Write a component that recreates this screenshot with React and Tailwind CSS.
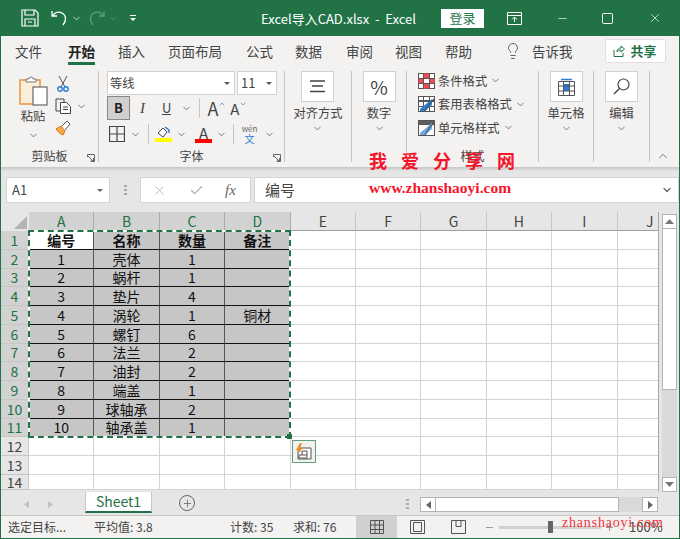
import React from 'react';
import { ChevronDown, ChevronUp, Lightbulb, Plus, Minus, X, Check } from 'lucide-react';

const font = 'font-["Noto_Sans_CJK_SC","Liberation_Sans",sans-serif]';

const columns = ['A', 'B', 'C', 'D', 'E', 'F', 'G', 'H', 'I', 'J'];

const rows = [
  ['编号', '名称', '数量', '备注'],
  ['1', '壳体', '1', ''],
  ['2', '蜗杆', '1', ''],
  ['3', '垫片', '4', ''],
  ['4', '涡轮', '1', '铜材'],
  ['5', '螺钉', '6', ''],
  ['6', '法兰', '2', ''],
  ['7', '油封', '2', ''],
  ['8', '端盖', '1', ''],
  ['9', '球轴承', '2', ''],
  ['10', '轴承盖', '1', ''],
];

function Caret({ className = '' }) {
  return <ChevronDown size={11} strokeWidth={1.5} className={`text-[#444] ${className}`} />;
}

function TitleBar() {
  return (
    <div className="flex h-9 shrink-0 items-center bg-[#217346] text-white">
      <svg width="18" height="18" viewBox="0 0 18 18" fill="none" stroke="#fff" strokeWidth="1.2" className="ml-[20px]">
        <path d="M1 1h13l3 3v13H1z" />
        <path d="M4 1v5h9V1M4 17v-7h10v7M7 13h4" />
      </svg>
      <svg width="17" height="18" viewBox="0 0 17 18" fill="none" stroke="#fff" strokeWidth="1.3" className="ml-[12px]">
        <path d="M1 2v5h5M1.500 7C4 3 8 2.500 11 4c4 2 5 7 1 12" />
      </svg>
      <Caret className="ml-[3px] text-white" />
      <svg width="17" height="18" viewBox="0 0 17 18" fill="none" stroke="#5f9d7c" strokeWidth="1.3" className="ml-[6px]">
        <path d="M16 2v5h-5M15.500 7C13 3 9 2.500 6 4c-4 2-5 7-1 12" />
      </svg>
      <ChevronDown size={11} strokeWidth={1.5} className="ml-[3px] text-[#5f9d7c]" />
      <svg width="8" height="8" viewBox="0 0 8 8" fill="#fff" className="ml-[10px]">
        <path d="M1 1h6v1H1zM1 4h6L4 7z" />
      </svg>
      <div className="ml-[124px] w-[156px] whitespace-nowrap text-[13px] leading-none">Excel导入CAD.xlsx&nbsp; -&nbsp; Excel</div>
      <div className="ml-[24px] flex h-[19px] w-[43px] items-center justify-center bg-white text-[13px] text-[#217346]">登录</div>
      <svg width="15" height="13" viewBox="0 0 15 13" fill="none" stroke="#fff" className="ml-[23px]">
        <path d="M.5.500h14v12H.5zM.5 3.500h14M7.500 10V5.500M5 7.500l2.500-2.500 2.500 2.500" />
      </svg>
      <Minus size={13} strokeWidth={1.2} className="ml-[34px]" />
      <svg width="11" height="11" viewBox="0 0 11 11" fill="none" stroke="#fff" className="ml-[33px]">
        <rect x=".5" y=".5" width="10" height="10" rx="1" />
      </svg>
      <X size={14} strokeWidth={1.2} className="ml-[35px]" />
    </div>
  );
}

function TabRow() {
  const tabs = [
    ['文件', 'ml-[14px]'],
    ['开始', 'ml-[26px]'],
    ['插入', 'ml-[23px]'],
    ['页面布局', 'ml-[23px]'],
    ['公式', 'ml-[24px]'],
    ['数据', 'ml-[22px]'],
    ['审阅', 'ml-[24px]'],
    ['视图', 'ml-[22px]'],
    ['帮助', 'ml-[23px]'],
  ];
  return (
    <div className="flex h-[30px] shrink-0 items-center bg-[#f3f2f1] text-[13.500px] text-[#444]">
      {tabs.map(([name, ml]) => (
        <div key={name} className={`relative flex h-full items-center ${ml} ${name === '开始' ? 'font-bold text-[#222]' : ''}`}>
          {name}
          {name === '开始' && <div className="absolute bottom-px left-0 h-[3px] w-full bg-[#217346]" />}
        </div>
      ))}
      <Lightbulb size={18} strokeWidth={1.2} className="ml-[32px] text-[#555]" />
      <div className="ml-[10px] text-[13.500px]">告诉我</div>
      <div className="ml-[32px] flex h-[24px] w-[61px] items-center justify-center gap-[5px] rounded-[2px] border border-[#e1dfdd] bg-white text-[13px] font-bold text-[#217346]">
        <svg width="12" height="12" viewBox="0 0 12 12" fill="none" stroke="#217346">
          <path d="M1 5v6.500h9V8M4 7c0-3 2-4 4-4V1l3.500 3L8 7V5C6 5 5 6 4 7z" />
        </svg>
        共享
      </div>
    </div>
  );
}

function GroupLauncher() {
  return (
    <svg width="8" height="8" viewBox="0 0 8 8" fill="none" stroke="#666">
      <path d="M.5 3V.5H7.500V7.500H4M1 2l5 5M3.500 7H6.500V4" />
    </svg>
  );
}

function Group({ width, label, launcher, children }) {
  return (
    <div className={`relative flex h-full shrink-0 flex-col border-r border-[#c8c6c4] ${width}`}>
      <div className="min-h-0 flex-1">{children}</div>
      <div className="h-[16px] text-center text-[12px] leading-[20px] text-[#444]">{label}</div>
      {launcher && (
        <div className="absolute right-[3px] bottom-0">
          <GroupLauncher />
        </div>
      )}
    </div>
  );
}

function BigDrop({ label, icon }) {
  return (
    <div className="flex flex-col items-center">
      <div className="flex h-[31px] w-[33px] items-center justify-center border border-[#d2d0ce] bg-white">{icon}</div>
      <div className="mt-[2px] text-[12.300px] leading-[18px] whitespace-nowrap text-[#444]">{label}</div>
      <Caret className="mt-[1px]" />
    </div>
  );
}

function StyleRow({ icon, label }) {
  return (
    <div className="flex h-[23.500px] items-center gap-[3px] text-[12.300px] text-[#444]">
      {icon}
      <span>{label}</span>
      <Caret />
    </div>
  );
}

function TableStyleIcon({ light }) {
  return (
    <svg width="17" height="16" viewBox="0 0 17 16" fill="none">
      <rect x=".5" y=".5" width="16" height="15" fill="#fff" stroke="#555" />
      <path d="M.5 .5h16v4H.5z" fill={light ? '#5f5f5f' : '#fff'} stroke="#555" />
      {!light && <path d="M.5 5.500h16M.5 10.500h16M5.500 .5v15M11.500 .5v15" stroke="#555" />}
      <path d="M2 13L14 3v6L7 15H2z" fill={light ? '#6aa9e4' : '#2b7cd3'} />
      <path d="M16 3l-5 5-4 7" stroke="#555" strokeWidth="1.200" />
    </svg>
  );
}

function Ribbon() {
  return (
    <div className="flex h-[101px] shrink-0 bg-[#f3f2f1] pt-[5px] pb-[5px]">
      <Group width="w-[98px]" label="剪贴板" launcher>
        <div className="flex">
          <div className="ml-[17px] flex w-[30px] flex-col items-center pt-[4px]">
            <svg width="29" height="31" viewBox="0 0 29 31" fill="none">
              <path d="M1 5h20v24H1z" fill="#fbeedb" stroke="#e8963c" strokeWidth="1.500" />
              <path d="M7 7V4h3a2 2 0 0 1 4 0h3v3z" fill="#fff" stroke="#777" />
              <rect x="14" y="12" width="14" height="18" fill="#fff" stroke="#666" strokeWidth="1.200" />
            </svg>
            <div className="mt-[3px] text-[12.300px] leading-[14px] text-[#444]">粘贴</div>
            <Caret className="mt-[7px]" />
          </div>
          <div className="ml-[7px] flex flex-col gap-[6px] pt-[4px]">
            <svg width="12" height="17" viewBox="0 0 12 17" fill="none" className="ml-[2px]" stroke="#555">
              <path d="M2 1l6 11M10 1L4 12" />
              <circle cx="3" cy="14" r="2.200" stroke="#2b7cd3" strokeWidth="1.400" />
              <circle cx="9" cy="14" r="2.200" stroke="#2b7cd3" strokeWidth="1.400" />
            </svg>
            <div className="flex items-center gap-[4px]">
              <svg width="17" height="16" viewBox="0 0 17 16" fill="none" stroke="#444">
                <path d="M1 1h8v3M1 1v12h4" />
                <path d="M5.500 4.500h6l4 4v7h-10z" fill="#fff" />
                <path d="M8 9h5M8 11.500h5" />
              </svg>
              <Caret />
            </div>
            <svg width="16" height="16" viewBox="0 0 16 16" fill="none">
              <path d="M1 9l5-3 4 5-2 4C5 14 3 12 1 9z" fill="#f3a847" stroke="#d9782a" />
              <path d="M7 6l5-5 3 3-5 6" fill="#fff" stroke="#555" />
            </svg>
          </div>
        </div>
      </Group>
      <Group width="w-[186px]" label="字体" launcher>
        <div className="ml-[8px] flex flex-col">
          <div className="flex gap-[2px]">
            <div className="flex h-[24px] w-[128px] items-center border border-[#d2d0ce] bg-white pr-[4px] pl-[2px] text-[12.300px] text-[#444]">
              <span className="flex-1">等线</span>
              <svg width="6" height="3" viewBox="0 0 6 3" fill="#555"><path d="M0 0h6L3 3z" /></svg>
            </div>
            <div className="flex h-[24px] w-[40px] items-center border border-[#d2d0ce] bg-white pr-[4px] pl-[3px] text-[13px] text-[#444]">
              <span className="flex-1">11</span>
              <svg width="6" height="3" viewBox="0 0 6 3" fill="#555"><path d="M0 0h6L3 3z" /></svg>
            </div>
          </div>
          <div className="mt-px flex h-[24px] items-center text-[#444]">
            <div className="flex h-[24px] w-[23px] items-center justify-center border border-[#8a8886] bg-[#d2d0ce] text-[13px] font-bold text-[#222]">B</div>
            <span className="ml-[10px] font-['Liberation_Serif',serif] text-[15px] italic">I</span>
            <span className="ml-[17px] border-b border-[#444] text-[13px] leading-[13px]">U</span>
            <Caret className="ml-[10px]" />
            <div className="ml-[7px] h-[20px] w-px bg-[#c8c6c4]" />
            <span className="ml-[7px] text-[18px] leading-none">A</span>
            <ChevronUp size={8} strokeWidth={2} className="mb-[9px] text-[#2b7cd3]" />
            <span className="ml-[4px] text-[15px] leading-none">A</span>
            <ChevronDown size={8} strokeWidth={2} className="mb-[9px] text-[#2b7cd3]" />
          </div>
          <div className="mt-[3px] flex h-[22px] items-center">
            <svg width="16" height="16" viewBox="0 0 16 16" fill="none" stroke="#444" className="ml-[2px]">
              <path d="M.5 .5h15v15H.5zM8 .5v15M.5 8h15" strokeWidth="1.200" />
            </svg>
            <Caret className="ml-[5px]" />
            <div className="ml-[7px] h-[20px] w-px bg-[#c8c6c4]" />
            <div className="ml-[6px] flex w-[17px] flex-col items-center">
              <svg width="14" height="12" viewBox="0 0 14 12" fill="none">
                <path d="M1 7l5-5 4 4-4 5z" fill="#fff" stroke="#444" />
                <path d="M8 1l4 3v3" stroke="#2b7cd3" strokeWidth="1.500" />
              </svg>
              <div className="h-[4px] w-[17px] bg-[#ffff00]" />
            </div>
            <Caret className="ml-[4px]" />
            <div className="ml-[8px] flex w-[17px] flex-col items-center">
              <span className="text-[15px] leading-[13px] text-[#444]">A</span>
              <div className="h-[4px] w-[17px] bg-[#ff0000]" />
            </div>
            <Caret className="ml-[4px]" />
            <div className="ml-[6px] h-[20px] w-px bg-[#c8c6c4]" />
            <div className="ml-[7px] flex w-[17px] flex-col items-center text-center">
              <span className="text-[8px] leading-[9px] text-[#666]">wén</span>
              <span className="text-[10px] leading-[11px] text-[#2b7cd3]">文</span>
            </div>
            <Caret className="ml-[6px]" />
          </div>
        </div>
      </Group>
      <Group width="w-[67px]" label="">
        <div className="flex justify-center">
          <BigDrop
            label="对齐方式"
            icon={
              <svg width="15" height="13" viewBox="0 0 15 13" stroke="#444" strokeWidth="1.300">
                <path d="M0 1h15M2 6h11M0 11.500h15" />
              </svg>
            }
          />
        </div>
      </Group>
      <Group width="w-[55px]" label="">
        <div className="flex justify-center">
          <BigDrop label="数字" icon={<span className="text-[19px] leading-none text-[#444]">%</span>} />
        </div>
      </Group>
      <Group width="w-[132px]" label="样式">
        <div className="-mt-[2px] ml-[11px] flex flex-col">
          <StyleRow
            label="条件格式"
            icon={
              <svg width="17" height="16" viewBox="0 0 17 16" fill="none">
                <rect x=".5" y=".5" width="16" height="15" fill="#fff" stroke="#555" />
                <path d="M5.500 .5h6v5h-6zM.5 5.500h5v5h-5zM11.500 5.500h5v5h-5zM5.500 10.500h6v5h-6z" fill="#ef4d55" />
                <path d="M.5 5.500h16M.5 10.500h16M5.500 .5v15M11.500 .5v15" stroke="#555" />
              </svg>
            }
          />
          <StyleRow label="套用表格格式" icon={<TableStyleIcon />} />
          <StyleRow label="单元格样式" icon={<TableStyleIcon light />} />
        </div>
      </Group>
      <Group width="w-[55px]" label="">
        <div className="flex justify-center">
          <BigDrop
            label="单元格"
            icon={
              <svg width="17" height="18" viewBox="0 0 17 18" fill="none">
                <path d="M.5 3.500h16v14H.5z" stroke="#555" fill="#fff" />
                <path d="M5 6h7v7H5z" fill="#2b7cd3" />
                <path d="M.5 8h16M.5 13h16M5.500 3.500v14M11.500 3.500v14" stroke="#555" />
                <path d="M3 1.500h11" stroke="#2b7cd3" strokeWidth="1.500" />
              </svg>
            }
          />
        </div>
      </Group>
      <Group width="w-[56px]" label="">
        <div className="flex justify-center">
          <BigDrop
            label="编辑"
            icon={
              <svg width="17" height="17" viewBox="0 0 17 17" fill="none" stroke="#444" strokeWidth="1.200">
                <circle cx="10.500" cy="6.500" r="5.500" />
                <path d="M6.500 10.500L1 16" strokeWidth="1.500" />
              </svg>
            }
          />
        </div>
      </Group>
      <div className="relative flex-1">
        <ChevronUp size={14} strokeWidth={1.200} className="absolute right-[9px] -bottom-[1px] text-[#444]" />
      </div>
    </div>
  );
}

function FormulaBar() {
  return (
    <div className="flex h-[45px] shrink-0 items-start bg-[#e6e6e6] pt-[10px] shadow-[inset_0_4px_3px_-2px_#c4c4c4]">
      <div className="ml-[5px] flex h-[26px] w-[104px] items-center border border-[#d4d4d4] bg-white pr-[6px] pl-[5px] text-[13px] text-[#444]">
        <span className="flex-1">A1</span>
        <svg width="6" height="3" viewBox="0 0 6 3" fill="#666"><path d="M0 0h6L3 3z" /></svg>
      </div>
      <div className="ml-[12px] flex h-[26px] w-[6px] flex-col items-center justify-center gap-[2px]">
        <div className="h-[2px] w-[3px] bg-[#aaa]" />
        <div className="h-[2px] w-[3px] bg-[#aaa]" />
        <div className="h-[2px] w-[3px] bg-[#aaa]" />
      </div>
      <div className="ml-[12px] flex h-[26px] w-[111px] items-center border border-[#d4d4d4] bg-white pl-[11px] text-[#b0b0b0]">
        <X size={15} strokeWidth={1.300} />
        <Check size={15} strokeWidth={2} className="ml-[22px]" />
        <span className="ml-[21px] font-['Liberation_Serif',serif] text-[15px] text-[#666] italic">fx</span>
      </div>
      <div className="ml-[3px] flex h-[26px] flex-1 items-center border border-[#d4d4d4] bg-white pr-[5px] pl-[10px] text-[15px] text-[#444]">
        <span className="flex-1">编号</span>
        <ChevronDown size={12} strokeWidth={2.500} className="text-[#666]" />
      </div>
    </div>
  );
}

function Sheet() {
  return (
    <div className="flex h-[280px] shrink-0 overflow-hidden bg-[#e6e6e6]">
      <div className="relative h-[280px] w-[658px] shrink-0 overflow-hidden border-r border-[#a8a8a8]">
        <div className="grid grid-cols-[28px_repeat(10,65.4px)] grid-rows-[19px_repeat(13,18.75px)_auto]">
          <div className="relative bg-[#e6e6e6]">
            <svg width="13" height="13" viewBox="0 0 13 13" className="absolute right-[2px] bottom-[2px]">
              <path d="M13 0v13H0z" fill="#b4b4b4" />
            </svg>
          </div>
          {columns.map((c, i) => (
            <div
              key={c}
              className={`flex items-center justify-center border-r border-b text-[14px] leading-none ${
                i < 4 ? 'border-r-[#ababab] border-b-[#217346] bg-[#d2d2d2] text-[#217346]' : 'border-r-[#c6c6c6] border-b-[#9f9f9f] bg-[#e6e6e6] text-[#444]'
              }`}
            >
              {c}
            </div>
          ))}
          {Array.from({ length: 14 }, (_, r) => (
            <React.Fragment key={r}>
              <div
                className={`flex items-center justify-center border-r border-b border-[#c6c6c6] text-[14px] leading-none ${
                  r < 11 ? 'border-r-[#217346] bg-[#d2d2d2] text-[#217346]' : 'bg-[#e6e6e6] text-[#444]'
                }`}
              >
                {r + 1}
              </div>
              {columns.map((c, i) => {
                const selected = r < 11 && i < 4;
                const text = selected ? rows[r][i] : '';
                return (
                  <div
                    key={c}
                    className={`flex items-center justify-center overflow-hidden border-r border-b text-[14px] leading-none whitespace-nowrap text-[#111] ${
                      selected ? 'border-r-[#555] border-b-[#111] bg-[#c6c6c6]' : 'border-[#d4d4d4] bg-white'
                    } ${r === 0 && i === 0 ? 'bg-white' : ''} ${r === 0 ? 'font-bold' : ''}`}
                  >
                    {text}
                  </div>
                );
              })}
            </React.Fragment>
          ))}
        </div>
        {/* copy marquee around A1:D11 */}
        <div className="absolute top-[18px] left-[27px] h-[208px] w-[263px] border-2 border-white">
          <div className="absolute -inset-[2px] border-2 border-dashed border-[#217346]" />
          <div className="absolute -right-[3px] -bottom-[3px] h-[5px] w-[5px] bg-[#217346]" />
        </div>
        {/* paste options button */}
        <div className="absolute top-[228px] left-[291px] flex h-[23px] w-[24px] items-center justify-center border border-[#5f9d7c] bg-[#f3f2f1]">
          <svg width="18" height="17" viewBox="0 0 18 17" fill="none">
            <path d="M3 5h13v11H3z" fill="#fff" stroke="#555" />
            <path d="M4 12h8v3H4zM7 12V8h5v4" stroke="#555" />
            <path d="M5 0L1 7h3L3 11l5-6H5l2-5z" fill="#ef8a2c" />
          </svg>
        </div>
      </div>
      <div className="ml-[3px] flex h-[280px] w-[15px] shrink-0 flex-col pt-[2px]">
        <div className="flex h-[15px] items-center justify-center border border-[#b4b4b4] bg-white">
          <svg width="9" height="5" viewBox="0 0 9 5" fill="#777"><path d="M4.500 0L9 5H0z" /></svg>
        </div>
        <div className="h-[161px] border-x border-b border-[#b4b4b4] bg-white" />
        <div className="flex-1 bg-[#d9d9d9]" />
        <div className="flex h-[15px] items-center justify-center border border-[#b4b4b4] bg-white">
          <svg width="9" height="5" viewBox="0 0 9 5" fill="#777"><path d="M4.500 5L9 0H0z" /></svg>
        </div>
      </div>
    </div>
  );
}

function TabBar() {
  return (
    <div className="flex h-[24px] shrink-0 items-start border-b border-[#c6c6c6] bg-[#e6e6e6]">
      <svg width="5" height="7" viewBox="0 0 5 7" fill="#c0c0c0" className="mt-[9px] ml-[23px]"><path d="M5 0v7L0 3.500z" /></svg>
      <svg width="5" height="7" viewBox="0 0 5 7" fill="#c0c0c0" className="mt-[9px] ml-[19px]"><path d="M0 0v7l5-3.500z" /></svg>
      <div className="ml-[32px] flex h-[21px] w-[67px] items-center justify-center border-x border-b-2 border-x-[#c6c6c6] border-b-[#217346] bg-white text-[14px] text-[#217346]">
        Sheet1
      </div>
      <div className="mt-[3px] ml-[27px] flex h-[16px] w-[16px] items-center justify-center rounded-full border border-[#666]">
        <Plus size={11} strokeWidth={1.500} className="text-[#555]" />
      </div>
      <div className="mt-[7px] ml-[211px] flex h-[10px] w-[3px] flex-col justify-between">
        <div className="h-[2px] bg-[#aaa]" />
        <div className="h-[2px] bg-[#aaa]" />
        <div className="h-[2px] bg-[#aaa]" />
      </div>
      <div className="mt-[5px] ml-[11px] flex h-[15px] w-[238px]">
        <div className="flex w-[16px] items-center justify-center border border-[#b4b4b4] bg-white">
          <svg width="5" height="8" viewBox="0 0 5 8" fill="#666"><path d="M5 0v8L0 4z" /></svg>
        </div>
        <div className="w-[183px] border-y border-r border-[#b4b4b4] bg-white" />
        <div className="flex-1 bg-[#d9d9d9]" />
        <div className="flex w-[16px] items-center justify-center border border-[#b4b4b4] bg-white">
          <svg width="5" height="8" viewBox="0 0 5 8" fill="#666"><path d="M0 0v8l5-4z" /></svg>
        </div>
      </div>
    </div>
  );
}

function StatusBar() {
  return (
    <div className="flex h-[22px] shrink-0 items-center bg-[#f3f2f1] text-[12px] text-[#444]">
      <span className="ml-[7px] w-[86px]">选定目标...</span>
      <span className="w-[136px]">平均值: 3.8</span>
      <span className="w-[63px]">计数: 35</span>
      <span className="w-[63px]">求和: 76</span>
      <div className="flex h-full w-[41px] items-center justify-center bg-[#d2d0ce]">
        <svg width="14" height="14" viewBox="0 0 14 14" fill="none" stroke="#555">
          <path d="M.5 .5h13v13H.5zM.5 5h13M.5 9.500h13M5 .5v13M9.500 .5v13" />
        </svg>
      </div>
      <svg width="15" height="14" viewBox="0 0 15 14" fill="none" stroke="#555" className="ml-[13px]">
        <path d="M.5 .5h14v13H.5zM3.500 2.500h8v9h-8z" />
      </svg>
      <svg width="15" height="14" viewBox="0 0 15 14" fill="none" stroke="#555" className="ml-[26px]">
        <path d="M.5 .5v13h14V.5zM5 .5v6h5V.5" />
      </svg>
      <Minus size={11} strokeWidth={1.200} className="ml-[18px] text-[#555]" />
      <div className="relative ml-[4px] h-[3px] w-[102px] bg-[#d2d0ce]">
        <div className="absolute -top-[5px] left-[49px] h-[12px] w-[5px] bg-[#666]" />
      </div>
      <Plus size={11} strokeWidth={1.200} className="ml-[3px] text-[#555]" />
      <span className="ml-[14px] text-[13px]">100%</span>
    </div>
  );
}

export default function App() {
  return (
    <div className={`relative flex h-[539px] w-[680px] flex-col overflow-hidden border-x border-b border-[#217346] ${font}`}>
      <TitleBar />
      <TabRow />
      <Ribbon />
      <FormulaBar />
      <Sheet />
      <TabBar />
      <StatusBar />
      {/* site watermark */}
      <div className="absolute top-[150px] left-[368px] flex w-[146px] justify-between font-['Liberation_Serif','Noto_Sans_CJK_SC',serif] text-[18px] leading-[24px] font-bold text-[#f5152b]">
        <span>我</span><span>爱</span><span>分</span><span>享</span><span>网</span>
      </div>
      <div className="absolute top-[179px] left-[368px] font-['Liberation_Serif',serif] text-[15.500px] leading-[18px] font-bold text-[#f5152b]">www.zhanshaoyi.com</div>
      <div className="absolute top-[514px] left-[561px] font-['Liberation_Serif',serif] text-[14px] leading-[18px] tracking-[.8px] text-[#f0323e]">zhanshaoyi.com</div>
    </div>
  );
}
